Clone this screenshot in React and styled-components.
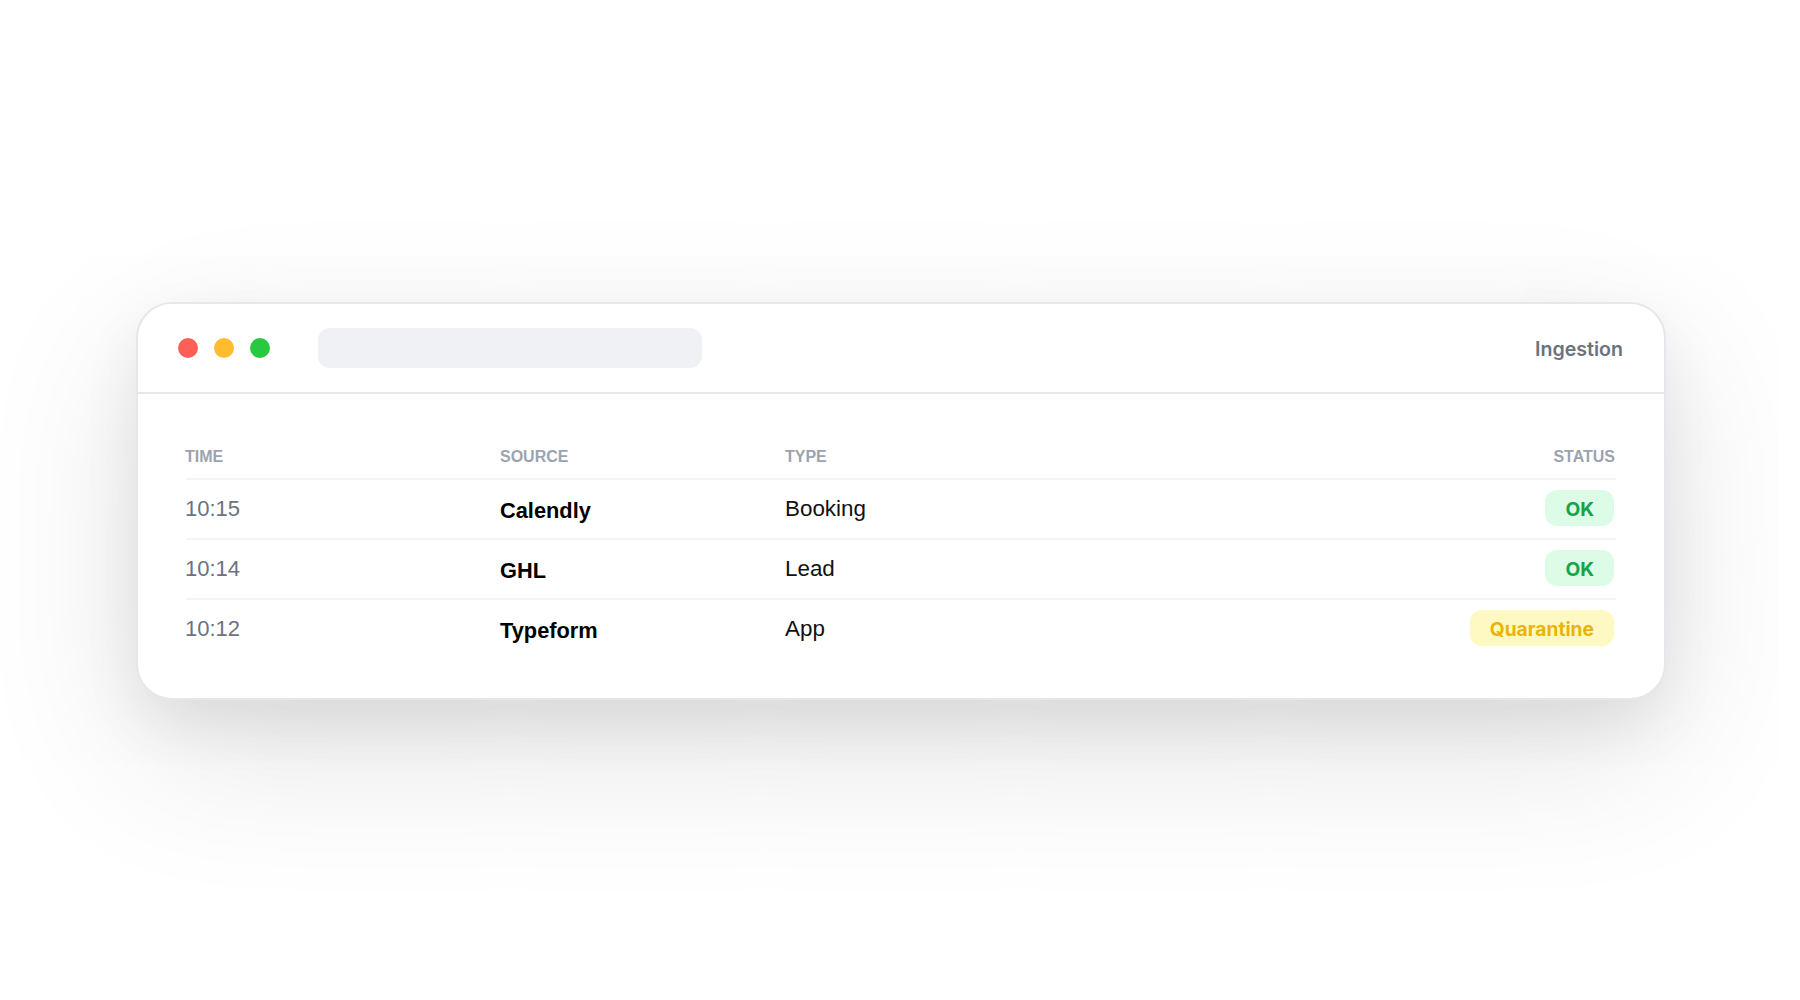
import React from "react";
import styled, { createGlobalStyle } from "styled-components";

const GlobalStyle = createGlobalStyle`
  html, body {
    margin: 0;
    height: 100%;
    background: #fff;
  }
  #root {
    height: 100%;
  }
`;

const Page = styled.div`
  height: 1000px;
  box-sizing: border-box;
  padding: 302px 134px 0 136px;
  overflow: hidden;
  font-family: Inter, "Liberation Sans", sans-serif;
`;

const Window = styled.div`
  height: 398px;
  box-sizing: border-box;
  background: #fff;
  border: 2px solid #e5e7eb;
  border-radius: 36px;
  box-shadow: 0 24px 60px rgba(0, 0, 0, 0.07), 0 50px 160px rgba(0, 0, 0, 0.12);
  overflow: hidden;
`;

const TitleBar = styled.div`
  display: flex;
  align-items: center;
  height: 90px;
  box-sizing: border-box;
  padding: 0 41px 0 40px;
  border-bottom: 2px solid #e5e7eb;
`;

const Lights = styled.div`
  display: flex;
  gap: 16px;
`;

const Light = styled.span`
  width: 20px;
  height: 20px;
  border-radius: 50%;
  background: ${(props) => props.color};
`;

const AddressBar = styled.div`
  width: 384px;
  height: 40px;
  margin-left: 48px;
  background: #f0f1f4;
  border-radius: 12px;
`;

const Title = styled.div`
  margin-left: auto;
  padding-top: 2px;
  font-size: 19.6px;
  font-weight: 600;
  color: #6b7280;
`;

const Body = styled.div`
  padding: 44px 48px 0;
`;

const Row = styled.div`
  display: grid;
  grid-template-columns: 314px 285px 1fr auto;
  align-items: center;
  box-sizing: border-box;
  height: ${(props) => (props.$head ? "42px" : "60px")};
  border-bottom: 2px solid ${(props) => (props.$last ? "transparent" : "#f3f4f6")};
`;

const HeadCell = styled.div`
  margin-left: ${(props) => (props.$first ? "-1px" : "0")};
  margin-right: ${(props) => (props.$right ? "1px" : "0")};
  padding-bottom: 2px;
  font-family: "Liberation Sans", Arial, sans-serif;
  font-size: 16px;
  font-weight: 700;
  color: #9ca3af;
  text-align: ${(props) => (props.$right ? "right" : "left")};
`;

const Time = styled.div`
  margin-left: -1px;
  font-family: "Liberation Sans", Arial, sans-serif;
  font-size: 22px;
  color: #6b7280;
`;

const Source = styled.div`
  padding-top: 3px;
  font-family: "Liberation Sans", Arial, sans-serif;
  font-size: 21.8px;
  font-weight: 700;
  color: #000;
`;

const Type = styled.div`
  font-family: "Liberation Sans", Arial, sans-serif;
  font-size: 22.4px;
  color: #111;
`;

const Pill = styled.span`
  display: block;
  justify-self: end;
  height: 36px;
  margin: 0 2px 2px 0;
  padding: 0 20px;
  border-radius: 12px;
  font-size: 19.2px;
  font-weight: 700;
  line-height: 38px;
  background: ${(props) => (props.$warn ? "#fef9c3" : "#dcfce7")};
  color: ${(props) => (props.$warn ? "#eab308" : "#16a34a")};
`;

const rows = [
  { time: "10:15", source: "Calendly", type: "Booking", status: "OK" },
  { time: "10:14", source: "GHL", type: "Lead", status: "OK" },
  { time: "10:12", source: "Typeform", type: "App", status: "Quarantine" },
];

export default function App() {
  return (
    <>
      <GlobalStyle />
      <Page>
        <Window>
          <TitleBar>
            <Lights>
              <Light color="#ff5f57" />
              <Light color="#febc2e" />
              <Light color="#28c840" />
            </Lights>
            <AddressBar />
            <Title>Ingestion</Title>
          </TitleBar>
          <Body>
            <Row $head>
              <HeadCell $first>TIME</HeadCell>
              <HeadCell>SOURCE</HeadCell>
              <HeadCell>TYPE</HeadCell>
              <HeadCell $right>STATUS</HeadCell>
            </Row>
            {rows.map((row, i) => (
              <Row key={row.time} $last={i === rows.length - 1}>
                <Time>{row.time}</Time>
                <Source>{row.source}</Source>
                <Type>{row.type}</Type>
                <Pill $warn={row.status !== "OK"}>{row.status}</Pill>
              </Row>
            ))}
          </Body>
        </Window>
      </Page>
    </>
  );
}
